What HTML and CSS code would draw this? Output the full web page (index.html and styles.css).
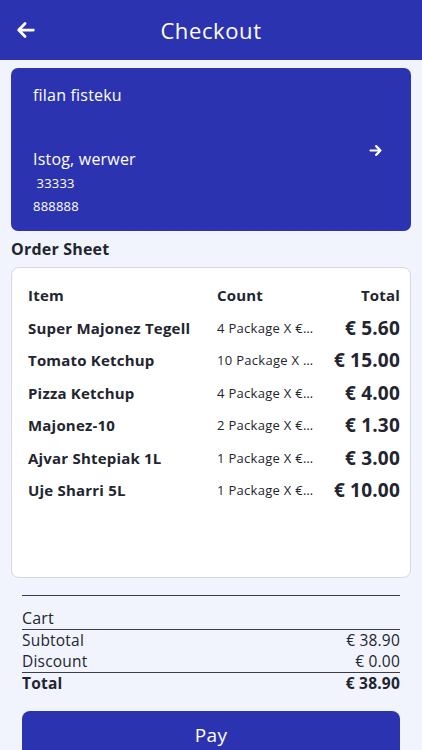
FILE: index.html
```html
<!DOCTYPE html>
<html lang="en">
<head>
    <meta charset="UTF-8">
    <meta name="viewport" content="width=device-width, initial-scale=1.0">
    <title>Checkout</title>
    <link rel="stylesheet" href="styles.css">
</head>
<body>
    <div class="topbar">
        <div class="back">
            <svg width="22" height="22" viewBox="0 0 24 24"><path d="M20 12H5M11 5l-7 7 7 7" fill="none" stroke="#fff" stroke-width="3" stroke-linecap="round" stroke-linejoin="round"/></svg>
        </div>
        <h1>Checkout</h1>
    </div>

    <div class="content">
        <div class="address">
            <div class="address-text">
                <div class="name">filan fisteku</div>
                <div class="street">Istog, werwer</div>
                <div class="small">&nbsp;33333</div>
                <div class="small">888888</div>
            </div>
            <svg width="15" height="15" viewBox="0 0 24 24"><path d="M4 12h15M13 5l7 7-7 7" fill="none" stroke="#fff" stroke-width="3.4" stroke-linecap="round" stroke-linejoin="round"/></svg>
        </div>

        <div class="section-title">Order Sheet</div>

        <div class="order">
            <div class="row head">
                <div>Item</div>
                <div>Count</div>
                <div class="total">Total</div>
            </div>
            <div class="row">
                <div class="item">Super Majonez Tegell</div>
                <div class="count">4 Package X € 1.40</div>
                <div class="total">€ 5.60</div>
            </div>
            <div class="row">
                <div class="item">Tomato Ketchup</div>
                <div class="count">10 Package X € 1.50</div>
                <div class="total">€ 15.00</div>
            </div>
            <div class="row">
                <div class="item">Pizza Ketchup</div>
                <div class="count">4 Package X € 1.00</div>
                <div class="total">€ 4.00</div>
            </div>
            <div class="row">
                <div class="item">Majonez-10</div>
                <div class="count">2 Package X € 0.65</div>
                <div class="total">€ 1.30</div>
            </div>
            <div class="row">
                <div class="item">Ajvar Shtepiak 1L</div>
                <div class="count">1 Package X € 3.00</div>
                <div class="total">€ 3.00</div>
            </div>
            <div class="row">
                <div class="item">Uje Sharri 5L</div>
                <div class="count">1 Package X € 10.00</div>
                <div class="total">€ 10.00</div>
            </div>
        </div>

        <div class="summary">
            <div class="cart">Cart</div>
            <div class="line"><span>Subtotal</span><span>€ 38.90</span></div>
            <div class="line ruled"><span>Discount</span><span>€ 0.00</span></div>
            <div class="line grand"><span>Total</span><span>€ 38.90</span></div>
            <button class="pay">Pay</button>
        </div>
    </div>
</body>
</html>
```

FILE: styles.css
```css
:root {
    --blue: #2c33b1;
    --bg: #f1f4fd;
    --text: #22252f;
    --rule: #3a3d45;
}

body {
    margin: 0;
    background: var(--bg);
    color: var(--text);
    font-family: 'Open Sans', 'Noto Sans', sans-serif;
    letter-spacing: 0.2px;
}

.topbar {
    height: 60px;
    background: var(--blue);
    color: #fff;
    display: flex;
    align-items: center;
    justify-content: center;
    position: relative;
}

.topbar h1 {
    margin: 0;
    font-size: 22px;
    font-weight: 400;
    letter-spacing: 0.6px;
}

.back {
    position: absolute;
    left: 15px;
    top: 19px;
    height: 22px;
}

.content {
    padding: 8px 11px 0;
}

.address {
    height: 163px;
    box-sizing: border-box;
    background: var(--blue);
    color: #fff;
    border-radius: 7px;
    padding: 14px 28px 13px 22px;
    display: flex;
    align-items: center;
    justify-content: space-between;
}

.address-text {
    align-self: stretch;
}

.name {
    font-size: 16px;
    line-height: 26px;
}

.street {
    font-size: 16px;
    line-height: 26px;
    margin-top: 38px;
}

.small {
    font-size: 13px;
    line-height: 23px;
}

.section-title {
    margin-top: 6px;
    font-size: 16px;
    font-weight: 700;
    line-height: 24px;
}

.order {
    margin-top: 6px;
    height: 311px;
    box-sizing: border-box;
    background: #fff;
    border: 1px solid #d6d8de;
    border-radius: 8px;
    padding: 11px 10px 0 16px;
}

.row {
    display: grid;
    grid-template-columns: 189px 100px minmax(0, 1fr);
    align-items: center;
    height: 32.5px;
}

.head {
    font-size: 15px;
    font-weight: 700;
}

.item {
    font-size: 15px;
    font-weight: 700;
    white-space: nowrap;
}

.count {
    font-size: 13px;
    letter-spacing: 0.3px;
    white-space: nowrap;
    overflow: hidden;
    text-overflow: ellipsis;
    padding-right: 2px;
}

.row .total {
    text-align: right;
    white-space: nowrap;
}

.row:not(.head) .total {
    font-size: 19px;
    font-weight: 700;
}

.summary {
    margin: 17px 11px 0;
    border-top: 1.5px solid var(--rule);
}

.cart {
    font-size: 16px;
    line-height: 22px;
    padding-top: 11px;
    border-bottom: 1.5px solid var(--rule);
}

.line {
    display: flex;
    justify-content: space-between;
    font-size: 15.5px;
    line-height: 21px;
}

.ruled {
    border-bottom: 1.5px solid var(--rule);
}

.grand {
    font-weight: 700;
}

.pay {
    display: block;
    width: 100%;
    height: 48px;
    margin-top: 17px;
    border: none;
    border-radius: 8px;
    background: var(--blue);
    color: #fff;
    font-family: inherit;
    font-size: 19px;
    letter-spacing: 0.4px;
}
```
